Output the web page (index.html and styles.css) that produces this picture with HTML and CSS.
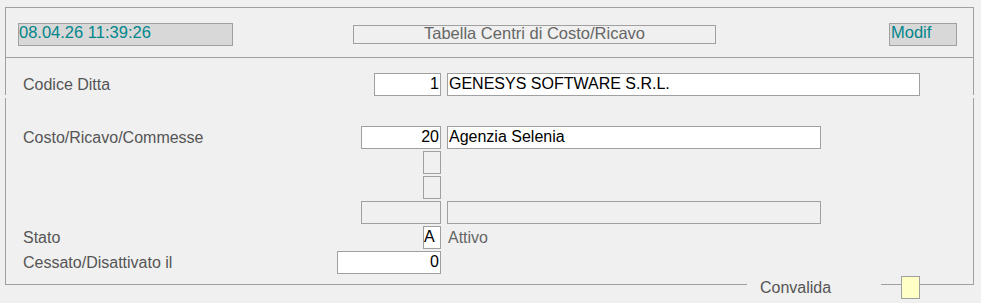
FILE: index.html
```html
<!DOCTYPE html>
<html lang="it">
<head>
    <meta charset="UTF-8">
    <title>Tabella Centri di Costo/Ricavo</title>
    <link rel="stylesheet" href="styles.css">
</head>
<body>
    <div class="frame">
        <div class="panel-top">
            <div class="header">
                <div class="status-box clock">08.04.26 11:39:26</div>
                <div class="title-box">Tabella Centri di Costo/Ricavo</div>
                <div class="status-box mode">Modif</div>
            </div>
            <div class="section-top">
                <div class="row">
                    <div class="label">Codice Ditta</div>
                    <div class="cell"><div class="field num w-code">1</div></div>
                    <div class="field desc w-long">GENESYS SOFTWARE S.R.L.</div>
                </div>
            </div>
        </div>

        <div class="panel-bottom">
            <div class="rows">
                <div class="row">
                    <div class="label">Costo/Ricavo/Commesse</div>
                    <div class="cell"><div class="field num w-mid">20</div></div>
                    <div class="field desc w-short">Agenzia Selenia</div>
                </div>
                <div class="row">
                    <div class="label"></div>
                    <div class="cell"><div class="field off w-tiny"></div></div>
                </div>
                <div class="row">
                    <div class="label"></div>
                    <div class="cell"><div class="field off w-tiny"></div></div>
                </div>
                <div class="row">
                    <div class="label"></div>
                    <div class="cell"><div class="field off w-mid"></div></div>
                    <div class="field off desc w-short"></div>
                </div>
                <div class="row">
                    <div class="label">Stato</div>
                    <div class="cell"><div class="field w-tiny">A</div></div>
                    <div class="note">Attivo</div>
                </div>
                <div class="row">
                    <div class="label">Cessato/Disattivato il</div>
                    <div class="cell"><div class="field num w-wide">0</div></div>
                </div>
            </div>
            <div class="footer">
                <div class="line grow"></div>
                <div class="footer-label">Convalida</div>
                <div class="line stub"></div>
                <div class="check"></div>
                <div class="line tail"></div>
            </div>
        </div>
    </div>
</body>
</html>
```

FILE: styles.css
```css
body {
    margin: 0;
    padding: 0;
    min-height: 303px;
    background-color: #f0f0f0;
    font-family: "Liberation Sans", Arial, sans-serif;
    font-size: 16px;
    color: #555;
}

.frame {
    width: 969px;
    margin: 7px 0 0 5px;
}

.panel-top {
    border: 1px solid #a0a0a0;
    border-bottom: none;
}

.header {
    display: flex;
    align-items: center;
    padding: 15px 0 11px 12px;
    border-bottom: 1px solid #a0a0a0;
    font-size: 16.5px;
}

.status-box {
    height: 23px;
    box-sizing: border-box;
    border: 1px solid #a0a0a0;
    background-color: #d8d8d8;
    color: #00868b;
    line-height: 17px;
    white-space: nowrap;
}

.clock {
    width: 215px;
}

.mode {
    width: 68px;
    margin-left: 173px;
    padding-left: 1px;
}

.title-box {
    width: 363px;
    height: 19px;
    box-sizing: border-box;
    margin-left: 120px;
    border: 1px solid #a0a0a0;
    color: #666;
    text-align: center;
    line-height: 15px;
    white-space: nowrap;
}

.section-top {
    height: 37px;
    box-sizing: border-box;
    padding: 15px 0 0 17px;
}

.panel-bottom {
    margin-top: 3px;
}

.rows {
    display: flex;
    flex-direction: column;
    gap: 2px;
    padding: 28px 0 2px 17px;
    border-left: 1px solid #a0a0a0;
    border-right: 1px solid #a0a0a0;
}

.row {
    display: flex;
    height: 23px;
}

.label {
    width: 314px;
    padding-top: 1px;
    line-height: 21px;
    white-space: nowrap;
}

.cell {
    width: 104px;
    display: flex;
    justify-content: flex-end;
}

.field {
    height: 23px;
    box-sizing: border-box;
    border: 1px solid #a0a0a0;
    background-color: #fff;
    color: #000;
    line-height: 20px;
    padding: 0 1px 0 0;
    white-space: nowrap;
}

.field.num {
    text-align: right;
}

.field.desc {
    margin-left: 6px;
    padding-left: 1px;
}

.field.off {
    background-color: #f0f0f0;
}

.w-tiny { width: 18px; }
.w-code { width: 67px; }
.w-mid { width: 80px; }
.w-wide { width: 104px; }
.w-short { width: 374px; }
.w-long { width: 473px; }

.note {
    margin-left: 7px;
    padding-top: 1px;
    line-height: 21px;
    color: #666;
}

.footer {
    display: flex;
    align-items: flex-start;
    height: 23px;
}

.line {
    height: 9px;
    box-sizing: border-box;
    border-bottom: 1px solid #a0a0a0;
}

.line.grow {
    flex: 1;
    border-left: 1px solid #a0a0a0;
}

.line.stub {
    width: 20px;
}

.line.tail {
    width: 54px;
    border-right: 1px solid #a0a0a0;
}

.footer-label {
    width: 134px;
    box-sizing: border-box;
    padding: 3px 0 0 13px;
    line-height: 18px;
    color: #555;
}

.check {
    width: 19px;
    height: 23px;
    box-sizing: border-box;
    border: 1px solid #a0a0a0;
    background-color: #ffffc6;
}
```
